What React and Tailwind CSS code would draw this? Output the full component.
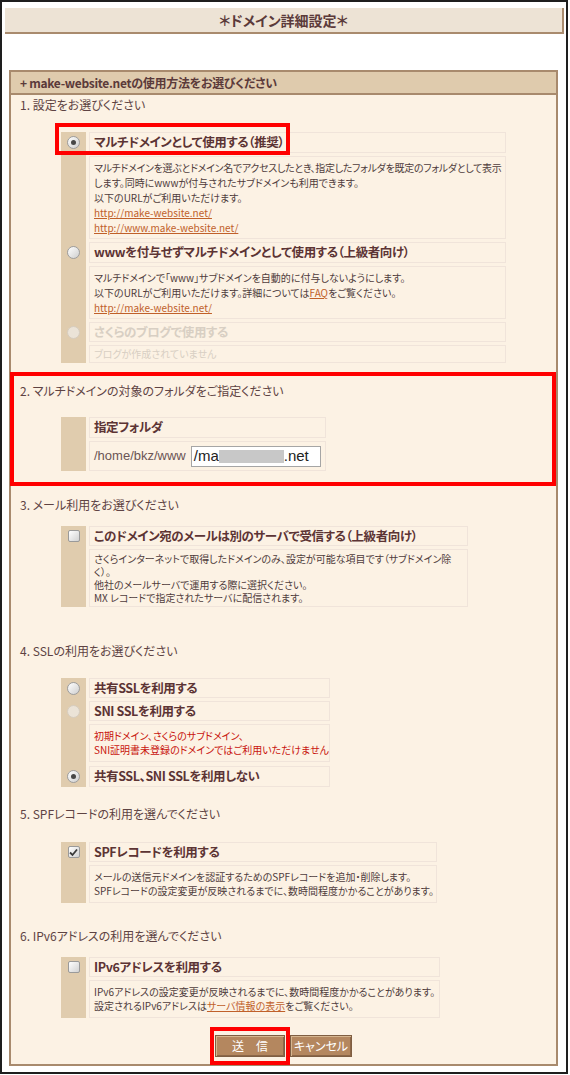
import React from "react";
import clsx from "clsx";

// little form controls drawn like the old XP-ish widgets
function Radio({ checked, disabled }) {
  return (
    <span
      className={clsx(
        "w-[13px] h-[13px] rounded-full border flex items-center justify-center",
        disabled
          ? "border-[#d6ccbe] bg-[#ebe3d7]"
          : "border-[#9d9d9d] bg-linear-to-br from-white to-[#cfcfcf]"
      )}
    >
      {checked && <span className="w-[5px] h-[5px] rounded-full bg-[#474747]" />}
    </span>
  );
}

function Checkbox({ checked }) {
  return (
    <span className="w-[12px] h-[12px] rounded-[2px] border border-[#9a9a9a] bg-linear-to-br from-white to-[#d2d2d2] flex items-center justify-center">
      {checked && (
        <svg width="9" height="9" viewBox="0 0 9 9">
          <path d="M1 4.5 L3.5 7 L8 1.5" fill="none" stroke="#3a3a3a" strokeWidth="1.8" />
        </svg>
      )}
    </span>
  );
}

function Row({ control, title, children, pt = "", titleCls = "h-[21px]", descCls = "", muted }) {
  return (
    <div className="flex">
      <div className={clsx("w-[25px] shrink-0 bg-[#e0ccae]", pt)}>
        <div className={clsx("flex items-center justify-center", titleCls)}>{control}</div>
      </div>
      <div className={clsx("flex-1 min-w-0 flex flex-col gap-[3px] pl-[3px]", pt)}>
        <div
          className={clsx(
            "flex items-center px-[4px] border border-[#f0e4da] text-[12.5px] tracking-[-0.4px] font-bold whitespace-nowrap",
            muted ? "text-[#d8cfc3]" : "text-[#5c3434]",
            titleCls
          )}
        >
          {title}
        </div>
        {children && (
          <div
            className={clsx(
              "border border-[#f0e4da] px-[4px] text-[10px] whitespace-nowrap",
              muted ? "text-[#d8cfc3]" : "text-[#4f3c3c]",
              descCls
            )}
          >
            {children}
          </div>
        )}
      </div>
    </div>
  );
}

function Title({ children, cls }) {
  return <div className={clsx("pl-[9px] h-[16px] leading-[16px] text-[12px] text-[#5e4343]", cls)}>{children}</div>;
}

const A = ({ children }) => <span className="text-[#c0602a] underline">{children}</span>;

const BTN =
  "h-[22px] bg-[#b4875f] border border-[#7f5e42] shadow-[inset_1px_1px_0_#d6b690,inset_-1px_-1px_0_#8c6748] text-white text-[12px]";

export default function App() {
  return (
    <div className="w-[570px] h-[1075px] bg-white font-['Noto_Sans_CJK_JP',sans-serif] [font-feature-settings:'palt']">
      <div className="w-[568px] h-[1074px] border-2 border-[#1e1e1e] flex flex-col">
        <div className="mt-[6px] ml-[3px] mr-[2px] h-[26px] bg-[#ede3d5] border-r-2 border-b-2 border-[#a98b6e] flex items-center justify-center text-[14px] font-bold text-[#5b3a3a]">
          ＊ドメイン詳細設定＊
        </div>

        <div className="mt-[36px] ml-[7px] mr-[8px] border-2 border-[#a88a6d] bg-[#fcf2e4]">
          <div className="h-[23px] bg-[#dfcbad] border-b-2 border-[#a88a6d] flex items-center pl-[9px] text-[12px] tracking-[-0.3px] font-bold text-[#5b3a3a]">
            + make-website.netの使用方法をお選びください
          </div>

          {/* 1 */}
          <Title cls="mt-[2px]">1. 設定をお選びください</Title>
          <div className="relative mt-[19px] ml-[50px] w-[445px]">
            <Row control={<Radio checked />} title="マルチドメインとして使用する（推奨）" descCls="h-[83px] py-[3px] leading-[15px]">
              <div className="tracking-[-0.3px]">マルチドメインを選ぶとドメイン名でアクセスしたとき、指定したフォルダを既定のフォルダとして表示</div>
              <div>します。同時にwwwが付与されたサブドメインも利用できます。</div>
              <div>以下のURLがご利用いただけます。</div>
              <div><A>http://make-website.net/</A></div>
              <div><A>http://www.make-website.net/</A></div>
            </Row>
            <Row pt="pt-[3px]" control={<Radio />} title="wwwを付与せずマルチドメインとして使用する（上級者向け）" descCls="h-[53px] py-[3px] leading-[15px]">
              <div>マルチドメインで「www」サブドメインを自動的に付与しないようにします。</div>
              <div>以下のURLがご利用いただけます。詳細については<A>FAQ</A>をご覧ください。</div>
              <div><A>http://make-website.net/</A></div>
            </Row>
            <Row pt="pt-[3px]" muted titleCls="h-[20px]" control={<Radio disabled />} title="さくらのブログで使用する" descCls="h-[18px] leading-[16px]">
              <div>ブログが作成されていません</div>
            </Row>
            <div className="absolute left-[-6px] top-[-9px] w-[235px] h-[32px] border-4 border-[#ff0000]" />
          </div>

          {/* 2 */}
          <div className="mt-[9px] -ml-[1px] border-4 border-[#ff0000] pt-[7px] pb-[11px]">
            <div className="pl-[6px] h-[16px] leading-[16px] text-[12px] text-[#5e4343]">2. マルチドメインの対象のフォルダをご指定ください</div>
            <div className="mt-[18px] ml-[47px] w-[265px]">
              <Row control={null} title="指定フォルダ" descCls="h-[30px] flex items-center">
                <span className="font-['Liberation_Sans',sans-serif] text-[13px] text-[#6b5555]">/home/bkz/www</span>
                <div className="ml-[5px] w-[131px] h-[21px] bg-white border border-[#a5a5a5] flex items-center pl-[2px] font-['Liberation_Sans',sans-serif] text-[15px] text-[#222]">
                  <span>/ma</span>
                  <span className="w-[65px] h-[13px] bg-[#c8c8c8]" />
                  <span>.net</span>
                </div>
              </Row>
            </div>
          </div>

          {/* 3 */}
          <Title cls="mt-[11px]">3. メール利用をお選びください</Title>
          <div className="mt-[13px] ml-[50px] w-[407px]">
            <Row control={<Checkbox />} titleCls="h-[20px]" title="このドメイン宛のメールは別のサーバで受信する（上級者向け）" descCls="h-[58px] py-[2px] leading-[13px]">
              <div>さくらインターネットで取得したドメインのみ、設定が可能な項目です（サブドメイン除</div>
              <div>く）。</div>
              <div>他社のメールサーバで運用する際に選択ください。</div>
              <div>MX レコードで指定されたサーバに配信されます。</div>
            </Row>
          </div>

          {/* 4 */}
          <Title cls="mt-[36px]">4. SSLの利用をお選びください</Title>
          <div className="mt-[19px] ml-[50px] w-[269px]">
            <Row control={<Radio />} titleCls="h-[20px]" title="共有SSLを利用する" />
            <Row pt="pt-[3px]" control={<Radio disabled />} titleCls="h-[20px]" title="SNI SSLを利用する" descCls="h-[38px] py-[4px] leading-[14px] !text-[#c8120c]">
              <div>初期ドメイン、さくらのサブドメイン、</div>
              <div>SNI証明書未登録のドメインではご利用いただけません</div>
            </Row>
            <Row pt="pt-[4px]" control={<Radio checked />} titleCls="h-[21px]" title="共有SSL、SNI SSLを利用しない" />
          </div>

          {/* 5 */}
          <Title cls="mt-[19px]">5. SPFレコードの利用を選んでください</Title>
          <div className="mt-[20px] ml-[50px] w-[376px]">
            <Row control={<Checkbox checked />} titleCls="h-[20px]" title="SPFレコードを利用する" descCls="h-[38px] py-[4px] leading-[14px]">
              <div>メールの送信元ドメインを認証するためのSPFレコードを追加・削除します。</div>
              <div>SPFレコードの設定変更が反映されるまでに、数時間程度かかることがあります。</div>
            </Row>
          </div>

          {/* 6 */}
          <Title cls="mt-[25px]">6. IPv6アドレスの利用を選んでください</Title>
          <div className="mt-[13px] ml-[50px] w-[379px]">
            <Row control={<Checkbox />} titleCls="h-[20px]" title="IPv6アドレスを利用する" descCls="h-[38px] py-[4px] leading-[14px]">
              <div>IPv6アドレスの設定変更が反映されるまでに、数時間程度かかることがあります。</div>
              <div>設定されるIPv6アドレスは<A>サーバ情報の表示</A>をご覧ください。</div>
            </Row>
          </div>

          <div className="mt-[17px] mb-[7px] pr-[5px] h-[22px] flex items-center justify-center">
            <span className="-my-[8px] px-[1px] py-[4px] border-4 border-[#ff0000] flex">
              <button className={clsx(BTN, "w-[70px] tracking-[12px] pl-[12px]")}>送信</button>
            </span>
            <button className={clsx(BTN, "w-[62px]")}>キャンセル</button>
          </div>
        </div>
      </div>
    </div>
  );
}
